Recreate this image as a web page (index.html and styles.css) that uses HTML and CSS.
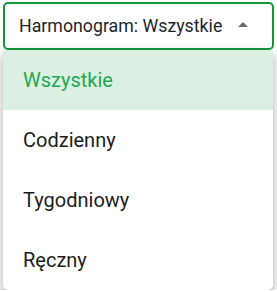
FILE: index.html
```html
<!DOCTYPE html>
<html lang="pl">
<head>
  <meta charset="UTF-8">
  <title>Harmonogram</title>
  <link rel="stylesheet" href="styles.css">
</head>
<body>

<div class="select">
  <div class="select-box">
    <span class="select-label">Harmonogram: Wszystkie</span>
    <svg class="arrow" width="24" height="24" viewBox="0 0 24 24"><path d="M7 14l5-5 5 5z"/></svg>
  </div>
  <div class="select-menu">
    <div class="option selected">Wszystkie</div>
    <div class="option">Codzienny</div>
    <div class="option">Tygodniowy</div>
    <div class="option">Ręczny</div>
  </div>
</div>

</body>
</html>
```

FILE: styles.css
```css
body {
  font-family: Roboto, 'Noto Sans', sans-serif;
  background-color: #fff;
  margin: 0;
  padding: 0;
  color: rgba(0,0,0,0.87);
}
.select {
  padding: 2px 3px 0 3px;
}
.select-box {
  display: flex;
  align-items: center;
  justify-content: space-between;
  height: 44px;
  border: 2px solid #119a3c;
  border-radius: 5px;
  padding: 0 17px 0 14px;
  font-size: 17.75px;
  color: #1f1f2b;
}
.arrow {
  fill: #6b6b6b;
  margin-top: -2px;
}
.select-menu {
  margin-right: 1px;
  background-color: white;
  border-radius: 0 0 5px 5px;
  box-shadow: 0 5px 5px -3px rgba(0,0,0,0.2), 0 8px 10px 1px rgba(0,0,0,0.14), 0 3px 14px 2px rgba(0,0,0,0.12);
  overflow: hidden;
}
.option {
  height: 60px;
  display: flex;
  align-items: center;
  padding-left: 20px;
  font-size: 20px;
  color: #1c1c1c;
}
.option.selected {
  background-color: #dcefe3;
  color: #22a753;
}
```
